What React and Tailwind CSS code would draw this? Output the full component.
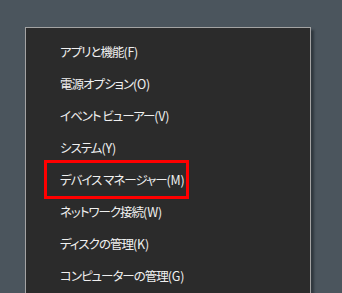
const items = [
  ['アプリと機能', '(F)'],
  ['電源オプション', '(O)'],
  ['イベント ビューアー', '(V)'],
  ['システム', '(Y)'],
  ['デバイス マネージャー', '(M)'],
  ['ネットワーク接続', '(W)'],
  ['ディスクの管理', '(K)'],
  ['コンピューターの管理', '(G)'],
]

export default function App() {
  return (
    <div className="h-[293px] w-[342px] overflow-hidden bg-[#4b555d] pl-[25px] pt-[27px]">
      <div className="relative h-[300px] w-[286px] border border-[#a3a3a3] bg-[#2b2b2b] pt-[8px] shadow-[3px_3px_2px_rgba(30,36,42,0.6)]">
        {items.map(([label, key], i) => (
          <div
            key={label}
            className="relative flex h-[32px] items-center pl-[34px] text-[12.5px] text-[#f0f0f0]"
            style={{ fontFamily: '"Noto Sans CJK JP", "Noto Sans", sans-serif', fontFeatureSettings: '"palt"' }}
          >
            <span className="tracking-[-1px]">{label}</span>
            <span className="tracking-[-0.2px]">{key}</span>
            {i === 4 && (
              <div className="absolute left-[18px] top-[-4px] h-[39px] w-[145px] border-[3px] border-[#ff0000]" />
            )}
          </div>
        ))}
      </div>
    </div>
  )
}
